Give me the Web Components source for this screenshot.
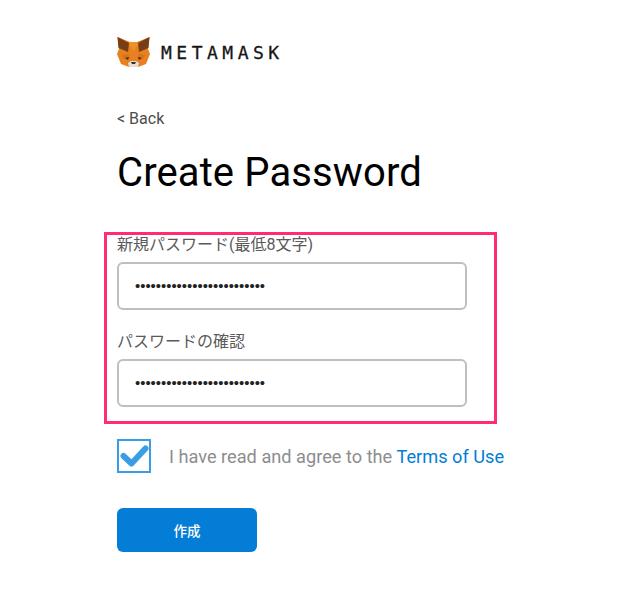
<!DOCTYPE html>
<html><head><meta charset="utf-8"><style>
html,body{margin:0;background:#fff}
body{font-family:Roboto,"Noto Sans CJK JP",sans-serif;color:#4d4d4d}
</style></head><body>
<template id="t-logo"><style>
:host{display:flex;align-items:center;gap:11px;height:30px}
svg{width:33px;height:30px;display:block}
span{font:400 18px "DejaVu Sans Mono",monospace;letter-spacing:4.500px;color:#161616;line-height:30px;position:relative;top:1px;-webkit-text-stroke:.3px #161616}
</style>
<svg viewBox="0 0 33 30">
<polygon points="0.500,0 13,5 20,5 32.500,0 31,12 33,17 29,27 21,30 12,30 4,27 0,17 2,12" fill="#e8801f"/>
<polygon points="0.500,0 12,6 11,15 1.500,11" fill="#763d16"/>
<polygon points="32.500,0 21,6 22,15 31.500,11" fill="#763d16"/>
<polygon points="13,5 20,5 21,8 16.500,14 12,8" fill="#f0902a"/>
<polygon points="5,18 11,17 13,21 7,22" fill="#d9731a"/>
<polygon points="28,18 22,17 20,21 26,22" fill="#d9731a"/>
<polygon points="8,21 12,20 11,23" fill="#33302c"/>
<polygon points="25,21 21,20 22,23" fill="#33302c"/>
<polygon points="11,26 14,24 19,24 22,26 21,30 12,30" fill="#e6ddd2"/>
<polygon points="14,25 19,25 18,27 15,27" fill="#33302c"/>
</svg><span><slot></slot></span></template>

<template id="t-field"><style>
:host{display:block;width:350px}
label{display:block;font-size:16px;line-height:20px;color:#5a5a5a;height:20px;margin-bottom:7px}
.box{box-sizing:border-box;height:48px;border:2px solid #bbc0c5;border-radius:6px;padding-left:16px;display:flex;align-items:center;
font:14.860px "Liberation Sans",sans-serif;color:#222}
</style><label><slot name="label"></slot></label><div class="box"><slot name="value"></slot></div></template>

<template id="t-check"><style>
:host{display:flex;align-items:center;height:36px;font-size:18.200px;color:#8d8d8d;gap:18px}
.c{box-sizing:border-box;width:34px;height:34px;border:2px solid #3a9ee4;display:flex;align-items:center;justify-content:center}
svg{width:29px;height:24px;display:block}
::slotted(a){color:#037dd6;text-decoration:none}
</style><div class="c"><svg viewBox="0 0 29 24"><path d="M3.500 12 11.500 19.500 25.500 4.500" fill="none" stroke="#3a9ee4" stroke-width="6" stroke-linecap="round" stroke-linejoin="round"/></svg></div><div><slot></slot></div></template>

<template id="t-btn"><style>
:host{display:flex;align-items:center;justify-content:center;width:140px;height:44px;background:#037dd6;border-radius:6px;color:#fff;font-size:13.500px;font-weight:500}
</style><slot></slot></template>

<template id="t-frame"><style>
:host{position:absolute;left:104px;top:232px;width:393px;height:192px;box-sizing:border-box;border:3px solid #ff2d6f;pointer-events:none}
</style></template>

<template id="t-page"><style>
:host{display:flex;flex-direction:column;padding:37px 0 0 117px;position:relative;height:564px}
.back{font-size:16px;line-height:20px;margin-top:42px;color:#4d4d4d}
h1{margin:18px 0 0;font-size:40px;font-weight:400;line-height:52px;color:#000;letter-spacing:.12px}
.f1{margin-top:36px}.f2{margin-top:22px}
.chk{margin-top:31px}.btn{margin-top:34px}
</style>
<slot name="logo"></slot>
<div class="back"><slot name="back"></slot></div>
<h1><slot name="title"></slot></h1>
<div class="f1"><slot name="f1"></slot></div>
<div class="f2"><slot name="f2"></slot></div>
<div class="chk"><slot name="check"></slot></div>
<div class="btn"><slot name="btn"></slot></div>
<slot name="frame"></slot>
</template>

<mm-page>
<mm-logo slot="logo">METAMASK</mm-logo>
<span slot="back">&lt; Back</span>
<span slot="title">Create Password</span>
<mm-field slot="f1"><span slot="label">新規パスワード(最低8文字)</span><span slot="value">•••••••••••••••••••••••••</span></mm-field>
<mm-field slot="f2"><span slot="label">パスワードの確認</span><span slot="value">•••••••••••••••••••••••••</span></mm-field>
<mm-check slot="check">I have read and agree to the <a>Terms of Use</a></mm-check>
<mm-btn slot="btn">作成</mm-btn>
<mm-frame slot="frame"></mm-frame>
</mm-page>
<script>
for(const [tag,id] of [['mm-logo','t-logo'],['mm-field','t-field'],['mm-check','t-check'],['mm-btn','t-btn'],['mm-frame','t-frame'],['mm-page','t-page']]){
 customElements.define(tag,class extends HTMLElement{constructor(){super();this.attachShadow({mode:'open'}).appendChild(document.getElementById(id).content.cloneNode(true))}});
}
</script>
</body></html>
